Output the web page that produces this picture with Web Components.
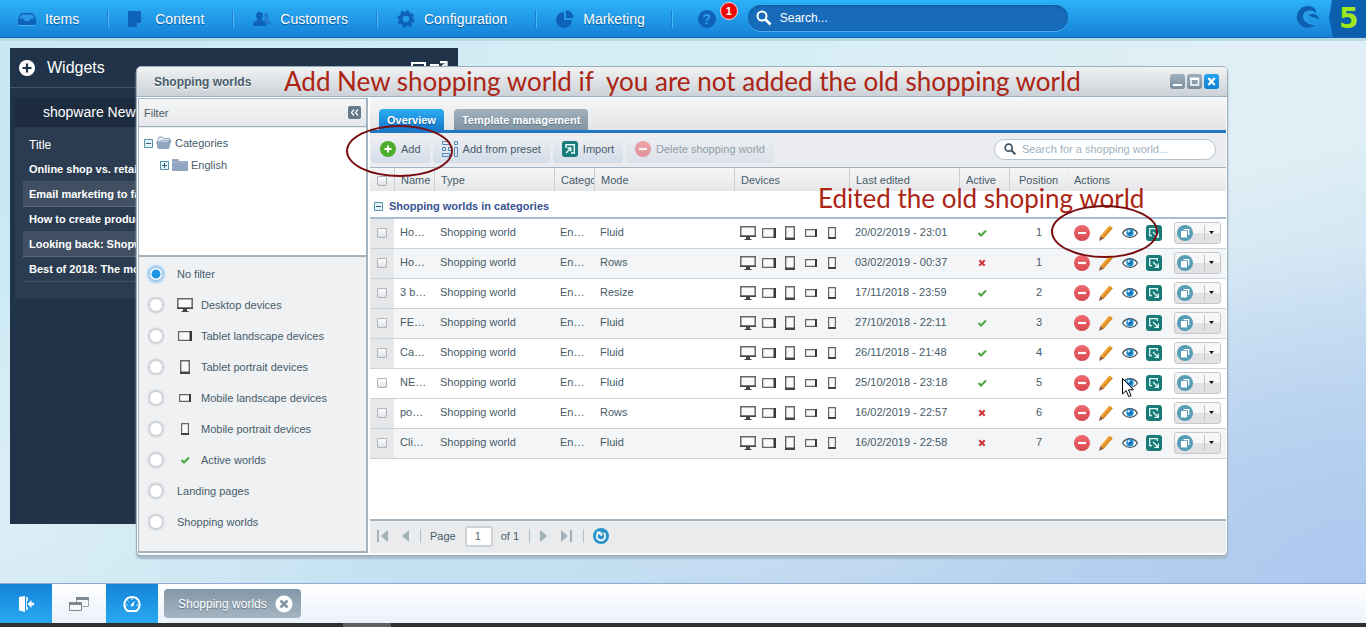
<!DOCTYPE html>
<html lang="en">
<head>
<meta charset="utf-8">
<title>Shopping worlds</title>
<style>
html, body { height: 100%; margin: 0; }
body { font: 11px/16px "Liberation Sans", Arial, sans-serif; color: #475c6a; overflow: hidden; }
</style>
</head>
<body>
<sw-app>
  <sw-topbar slot="top"></sw-topbar>
  <sw-widgets></sw-widgets>
  <sw-window heading="Shopping worlds">
    <sw-filter slot="side"></sw-filter>
    <sw-worlds></sw-worlds>
  </sw-window>
  <sw-taskbar slot="bottom"></sw-taskbar>
  <sw-notes slot="overlay"></sw-notes>
</sw-app>

<script>
const define = (name, html, setup) => {
  const template = document.createElement('template');
  template.innerHTML = html;
  customElements.define(name, class extends HTMLElement {
    constructor() {
      super();
      this.attachShadow({ mode: 'open' }).append(template.content.cloneNode(true));
    }
    connectedCallback() {
      if (setup && !this.ready) { this.ready = true; setup(this, this.shadowRoot); }
    }
  });
};

/* Icons: [width, height, svg content] */
const ICONS = {
  items: [18, 14, '<path d="M3 1h12l3 6v6H0V7z" fill="#0e62b8"/><path d="M3.6 2.4h10.800l2 4.200H12.500l-1.500 2.400h-4L5.500 6.600H1.600z" fill="#2a9ae8"/><path d="M.5 13.500h17" stroke="#49b2f3"/>'],
  content: [18, 18, '<path d="M0 1h13v11l-4 5H0z" fill="#0e62b8"/><path d="M9 17v-4h4z" fill="#2f8fe0"/>'],
  customers: [18, 16, '<path d="M12.500 2c2 0 3 1.300 3 3.200 0 1.500-.6 2.400-1.200 3 .2 1.700 3.700 1.600 3.700 4.300v1h-4.500c-.3-2-1.800-2.700-3-3.300.8-.8 1.200-2 1.200-4 0-1.300-.4-2.400-1-3.300.5-.6 1-.9 1.800-.9z" fill="#2378cc"/><path d="M6.500 1c2.200 0 3.400 1.500 3.400 3.600 0 1.800-.7 3-1.400 3.700.2 2.200 4.500 2 4.500 5.200v1.500H0v-1.500c0-3.200 4.300-3 4.500-5.200C3.800 7.600 3.100 6.400 3.100 4.600 3.100 2.500 4.300 1 6.500 1z" fill="#0e62b8"/>'],
  gear: [18, 18, '<circle cx="9" cy="9" r="5.200" fill="none" stroke="#0e62b8" stroke-width="4"/><circle cx="9" cy="9" r="7.400" fill="none" stroke="#0e62b8" stroke-width="2.600" stroke-dasharray="3.100 2.710"/>'],
  pie: [18, 18, '<path d="M8 2v8h8a8 8 0 1 1-8-8z" fill="#0e62b8"/><path d="M10 0a8 8 0 0 1 7.500 8H10z" fill="#0e62b8"/>'],
  search: [16, 16, '<circle cx="6" cy="6" r="4.500" fill="none" stroke="#fff" stroke-width="2"/><path d="M9.500 9.500l5 5" stroke="#fff" stroke-width="2.600"/>'],
  searchdark: [12, 12, '<circle cx="4.700" cy="4.700" r="3.500" fill="none" stroke="#3f5360" stroke-width="1.700"/><path d="M7.300 7.300l4 4" stroke="#3f5360" stroke-width="2"/>'],
  shopware: [24, 24, '<path d="M18.500 3.300A11 11 0 1 0 19 20.200C13 19.500 7.500 17 7.500 12.500 7.500 8 13 6.500 20 8c0-2-.5-3.700-1.500-4.700z" fill="#0e5fb0"/><path d="M20 7.500C14 3.500 7 6 7 11.500c0 5 6.500 8 12.500 8.500-4-2-8.500-4-8.500-7.500 0-3 4-4.500 9-5z" fill="#2a9de9"/><path d="M12.500 9.500c4-1.500 10.500-.5 10.500 5.500-3-3-8.500-2.500-10.500-5.500z" fill="#0e5fb0"/>'],
  plus: [16, 16, '<circle cx="8" cy="8" r="8" fill="#fff"/><path d="M8 3.500v9M3.500 8h9" stroke="#203348" stroke-width="2.200"/>'],
  panelmin: [16, 14, '<path d="M1 13V2h13v11" fill="none" stroke="#fff" stroke-width="2"/>'],
  panelout: [20, 14, '<path d="M2 14V4h8M6 13l10-10M11 1.200h6.500V8" fill="none" stroke="#fff" stroke-width="2.200"/>'],
  monitor: [16, 14, '<path d="M.8.800h14.400v9.400H.800z" fill="#fafafa" stroke="#666" stroke-width="1.500"/><path d="M0 9.500h16V11H0zM6 11h4v2h1.500v1h-7v-1H6z" fill="#444"/>'],
  tabletl: [16, 12, '<path d="M1.600 1.600h12v8.800h-12z" fill="#fafafa" stroke="#666" stroke-width="1.300"/><path d="M12.500 1H15v10h-2.500z" fill="#3a3a3a"/>'],
  tabletp: [16, 14, '<path d="M3.700.700h8.600v12.500H3.700z" fill="#fafafa" stroke="#666" stroke-width="1.400"/><path d="M3 11.500h10V14H3z" fill="#444"/>'],
  mobilel: [16, 10, '<path d="M2.600 1.600h10v6.800h-10z" fill="#fafafa" stroke="#666" stroke-width="1.200"/><path d="M12 1h2v8h-2z" fill="#3a3a3a"/>'],
  mobilep: [16, 12, '<path d="M4.600.600h6.800v10.800H4.600z" fill="#fafafa" stroke="#666" stroke-width="1.200"/><path d="M4 10h8v2H4z" fill="#444"/>'],
  check: [16, 10, '<path d="M4.500 5l2.500 2.500L12 2.500" fill="none" stroke="#4aa63c" stroke-width="2"/>'],
  cross: [16, 10, '<path d="M5.300 2.300l5.400 5.400M10.700 2.300L5.300 7.700" stroke="#d13438" stroke-width="2"/>'],
  add: [16, 16, '<circle cx="8" cy="8" r="8" fill="#4cac2c"/><path d="M8 4.500v7M4.500 8h7" stroke="#fff" stroke-width="2"/>'],
  minus: [16, 16, '<defs><linearGradient id="r" x2="0" y2="1"><stop stop-color="#ee6a70"/><stop offset="1" stop-color="#d74850"/></linearGradient></defs><circle cx="8" cy="8" r="8" fill="url(#r)"/><path d="M4 8h8" stroke="#fff" stroke-width="2.200"/>'],
  preset: [16, 16, '<g fill="none" stroke="#5687bd"><path d="M.5.500h7v3h-7zM12.500.500h3v3h-3zM.5 6.500h3v3h-3zM6.500 6.500h3v3h-3zM.5 12.500h7v3h-7zM12.500 6.500h3v9h-3z"/></g>'],
  import: [16, 16, '<rect width="16" height="16" rx="3" fill="#187b78"/><path d="M4 7V3.700h8.300V12H9" fill="none" stroke="#e8fbf8" stroke-width="1.500"/><path d="M4 12l4.500-4.500M5.500 7h3.300v3.300" fill="none" stroke="#e8fbf8" stroke-width="1.500"/>'],
  export: [16, 16, '<rect width="16" height="16" rx="3" fill="#187b78"/><path d="M6 10.700H3.700V3.700h7.600V6" fill="none" stroke="#e0f7f4" stroke-width="1.300"/><path d="M7 7l5 5M12.300 8.500v3.800H8.500" fill="none" stroke="#e0f7f4" stroke-width="1.300"/>'],
  pencil: [16, 16, '<path d="M11.500.500l3.200 2.700-9.200 10.500-3.200-2.600z" fill="#f0a02e"/><path d="M13.200 2l1.500 1.200-9.200 10.500-1.600-1.300z" fill="#dc8c26"/><path d="M2.300 11.100l3.200 2.600L1 16z" fill="#8a5a48"/>'],
  eye: [16, 12, '<path d="M.6 6C4 .3 12 .3 15.400 6 12 11.700 4 11.700.6 6z" fill="#fff" stroke="#465560" stroke-width="1.300"/><circle cx="8" cy="5.700" r="3.700" fill="#1f8fd6"/><circle cx="8" cy="5.700" r="1.500" fill="#0f5f9c"/><circle cx="6.800" cy="4.200" r="1.200" fill="#d6efff"/>'],
  copy: [16, 16, '<circle cx="8" cy="8" r="8" fill="#569db5"/><path d="M6.500 4.600h5.200v5.400" fill="none" stroke="#fff" stroke-width="1.300"/><path d="M4 6h6v6.500H4z" fill="#fff"/>'],
  folderopen: [16, 14, '<path d="M2 3l1-2h4l1 1.500h6v2H5L2 12z" fill="#e4ebf2" stroke="#8399b3" stroke-width=".8"/><path d="M0 5.500h11.500L14 4h1.500L13 13H2z" fill="#8fa5c0"/>'],
  folder: [16, 14, '<path d="M0 1h6l1.500 2H16v10H0z" fill="#8fa5c0"/><path d="M0 4h16" stroke="#a9bbd0"/>'],
  collapse: [9, 9, '<path d="M.5.500h8v8h-8z" fill="#e3f4fa" stroke="#5593a8"/><path d="M2 4.500h5" stroke="#2f6379"/>'],
  expand: [9, 9, '<path d="M.5.500h8v8h-8z" fill="#e3f4fa" stroke="#5593a8"/><path d="M2 4.500h5M4.500 2v5" stroke="#2f6379"/>'],
  first: [14, 12, '<path d="M1 0h2v12H1zM12 0v12L5 6z" fill="#a2b0b9"/>'],
  prev: [8, 12, '<path d="M7 0v12L0 6z" fill="#a2b0b9"/>'],
  next: [8, 12, '<path d="M1 0v12l7-6z" fill="#a2b0b9"/>'],
  last: [14, 12, '<path d="M11 0h2v12h-2zM2 0v12l7-6z" fill="#a2b0b9"/>'],
  reload: [16, 16, '<circle cx="8" cy="8" r="8" fill="#2a93ca"/><path d="M5.600 4.700a4.200 4.200 0 1 0 5 .2" fill="none" stroke="#fff" stroke-width="1.700"/><path d="M3.400 3.400h4.300v4.200z" fill="#fff"/><path d="M8.500 4.500v3.500" stroke="#fff" stroke-width="1.500"/>'],
  door: [16, 16, '<path d="M1 1l6-1v16l-6-1.500z" fill="#fff"/><path d="M8 1h2v4h-1v6h1v3H8z" fill="#cfe8fb"/><path d="M9.500 8l4-4v2.800H16v2.400h-2.500V12z" fill="#fff"/>'],
  windows: [20, 16, '<path d="M7.500 1.500h12v9h-12z" fill="#f6f8fb" stroke="#9aa3ab"/><path d="M7 1h13v3H7z" fill="#7e8890"/><path d="M.5 6.500h12v8H.500z" fill="#f6f8fb" stroke="#7e8890"/><path d="M0 6h13v3H0z" fill="#7e8890"/>'],
  gauge: [18, 16, '<path d="M4.500 15C-.8 10.500 1 1 9 1s9.800 9.500 4.500 14z" fill="none" stroke="#fff" stroke-width="2"/><path d="M11.800 5L10.500 10 8 10.500 7.600 8.800z" fill="#fff"/><path d="M9 2v2M3 9h1.500M13.500 9H15M4.600 4.600l1 1" stroke="#fff"/>'],
  close: [18, 18, '<circle cx="9" cy="9" r="8.500" fill="#fff"/><path d="M5.500 5.500l7 7M12.500 5.500l-7 7" stroke="#8296a5" stroke-width="2.800"/>'],
  wmin: [15, 15, '<path d="M3 10h9v2H3z" fill="#fff"/>'],
  wmax: [15, 15, '<path d="M4 5h7.500v6H4z" fill="none" stroke="#fff" stroke-width="1.500"/><path d="M3 3.500h9V6H3z" fill="#fff"/>'],
  wclose: [15, 15, '<path d="M4.300 4l6.400 7M10.700 4l-6.400 7" stroke="#fff" stroke-width="2.200"/>'],
  chevrons: [13, 13, '<path d="M6 3.500l-2.500 3L6 9.500M10 3.500l-2.500 3 2.500 3" fill="none" stroke="#fff" stroke-width="1.200"/>'],
  caret: [5, 3, '<path d="M0 0h5L2.500 3z" fill="#111"/>'],
  cursor: [13, 20, '<path d="M.5.500v15.500l3.600-3.400 2.600 6 2.400-1-2.600-5.800h5z" fill="#fff" stroke="#000"/>']
};
define('sw-icon', `<style>:host{display:inline-block;flex:none;line-height:0}svg{display:block}</style><span></span>`, (el, root) => {
  const [w, h, body] = ICONS[el.getAttribute('name')];
  root.querySelector('span').innerHTML = `<svg width="${w}" height="${h}" viewBox="0 0 ${w} ${h}" aria-hidden="true">${body}</svg>`;
});

define('sw-app', `<style>
:host{display:grid;grid-template-rows:38px 1fr 44px;height:100vh;position:relative;
 background:radial-gradient(ellipse 500px 330px at 100% 92%,#adc9ee,rgba(178,206,239,0)),radial-gradient(ellipse 360px 300px at 0 82%,#dceef5,rgba(220,238,245,0)),linear-gradient(165deg,rgba(218,236,243,0) 50%,#b8d2ef 92%),linear-gradient(90deg,#c8e9f4,#d4edf5 45%,#dfeff5 90%)}
main{position:relative;border-top:3px solid #b9d9e4;box-sizing:border-box}
</style><slot name="top"></slot><main><slot></slot></main><slot name="bottom"></slot><slot name="overlay"></slot>`);

define('sw-topbar', `<style>
:host{display:block}
header{display:flex;align-items:center;height:38px;box-sizing:border-box;background:linear-gradient(#2db2f8,#1581d8);border-bottom:1px solid #1267b2}
nav{display:flex;align-items:center}
nav a{display:flex;align-items:center;gap:9px;height:18px;padding:0 28px 0 20px;border-right:1px solid #1a7fd2;box-shadow:1px 0 #4cb9f6;
 font-size:14px;color:#fff;text-decoration:none;text-shadow:0 1px 1px #0c5496}
nav a:first-child{padding-left:18px}
nav a:last-child{padding-right:26px}
nav sw-icon{width:18px}
.help{position:relative;margin-left:26px;width:18px;height:18px;padding:0;border:0;border-radius:9px;background:#0e62b8;color:#2ea0ee;font:bold 14px/18px "Liberation Sans",sans-serif}
.help b{position:absolute;left:22px;top:-8px;width:16px;height:16px;border:1px solid #ffd6d6;border-radius:9px;background:#f00505;color:#fff;font-size:11px;line-height:16px}
label{display:flex;align-items:center;gap:8px;box-sizing:border-box;width:320px;height:26px;margin:0 auto 2px 32px;padding:0 8px;border-radius:13px;background:#176bb8;box-shadow:0 1px #4aaff2,inset 0 1px 2px #0f569d}
input{flex:1;min-width:0;border:0;outline:0;background:none;color:#fff;font:12px "Liberation Sans",sans-serif;padding:0}
input::placeholder{color:#fff;opacity:1}
.logo{margin:-4px 9px 0 0}
.five{width:37px;height:37px;box-sizing:border-box;padding-left:10px;background:#0c5faf;clip-path:polygon(3px 0,100% 0,100% 100%,4px 100%,0 50%);color:#9fe81a;font:bold 28px/38px "DejaVu Sans",sans-serif}
</style>
<header><nav>
<a href="#items"><sw-icon name="items"></sw-icon>Items</a>
<a href="#content"><sw-icon name="content"></sw-icon>Content</a>
<a href="#customers"><sw-icon name="customers"></sw-icon>Customers</a>
<a href="#configuration"><sw-icon name="gear"></sw-icon>Configuration</a>
<a href="#marketing"><sw-icon name="pie"></sw-icon>Marketing</a>
</nav>
<button class="help">?<b>1</b></button>
<label><sw-icon name="search"></sw-icon><input type="search" placeholder="Search..." aria-label="Search"></label>
<sw-icon class="logo" name="shopware"></sw-icon><span class="five">5</span></header>`);

define('sw-widgets', `<style>
:host{position:absolute;left:10px;top:7px;width:448px;bottom:59px;background:#203348;color:#fff}
header{display:flex;align-items:center;gap:12px;height:39px;padding:0 9px;border-bottom:1px solid #3f5266;font-size:16px}
header span{flex:1}
.tools{display:flex;gap:2px}
section{margin:10px 5px 0;background:#2b3c50;height:201px}
h2{margin:0;padding:0 28px;background:#1c2c3e;font:14px/29px "Liberation Sans",sans-serif}
table{width:calc(100% - 16px);margin:6px 8px 0;border-spacing:0;font-size:11px}
th{text-align:left;font-size:12px;font-weight:normal;height:24px;padding:0 6px}
td{height:24px;padding:0 6px;font-weight:bold;border-bottom:1px solid #3d5064}
tr:nth-child(even) td{background:#405062;border-color:#5d6b7b}
</style>
<header><sw-icon name="plus"></sw-icon><span>Widgets</span><div class="tools"><sw-icon name="panelmin"></sw-icon><sw-icon name="panelout"></sw-icon></div></header>
<section><h2>shopware News</h2><table><thead><tr><th>Title</th></tr></thead><tbody>
<tr><td>Online shop vs. retail</td></tr><tr><td>Email marketing to fans</td></tr><tr><td>How to create products</td></tr><tr><td>Looking back: Shopware</td></tr><tr><td>Best of 2018: The most</td></tr></tbody></table></section>`);

define('sw-window', `<style>
:host{position:absolute;left:136px;right:138px;top:25px;bottom:27px;display:flex;flex-direction:column;box-sizing:border-box;border:1px solid #9aabb9;border-radius:5px;background:#fff;overflow:hidden;box-shadow:0 3px 2px #a5bacd}
header{display:flex;align-items:center;gap:2px;height:29px;padding:0 8px 0 17px;border-bottom:1px solid #9db0bd;background:linear-gradient(#f1f2f3,#cbd2d8)}
h1{flex:1;margin:0;font:bold 12px/28px "Liberation Sans",sans-serif;color:#475c6a;text-shadow:0 1px #fff}
button{width:15px;height:15px;padding:0;border:0;border-radius:3px;background:linear-gradient(#9eb0bd,#7b8f9f)}
button.x{background:linear-gradient(#25a5ee,#0f7fd2)}
.body{flex:1;display:flex;min-height:0;padding:0 1px 2px 1px}
</style>
<header><h1></h1><button aria-label="Minimise"><sw-icon name="wmin"></sw-icon></button><button aria-label="Maximise"><sw-icon name="wmax"></sw-icon></button><button class="x" aria-label="Close"><sw-icon name="wclose"></sw-icon></button></header>
<div class="body"><slot name="side"></slot><slot></slot></div>`, (el, root) => {
  root.querySelector('h1').textContent = el.getAttribute('heading');
});

define('sw-filter', `<style>
:host{display:flex;flex-direction:column;flex:none;width:230px;box-sizing:border-box;border:1px solid #a3b4c0;border-width:1px 2px 2px 1px;margin-top:1px;background:#eff1f3}
header{display:flex;align-items:center;justify-content:space-between;height:27px;padding:0 5px;background:linear-gradient(#f4f5f6,#e6e8eb);border-bottom:1px solid #a3b4c0}
header button{width:13px;height:13px;padding:0;border:0;border-radius:2px;background:#64788a}
.tree{height:119px;box-sizing:content-box;padding:4px 0;border-bottom:2px solid #a3b4c0;background:#fff;border-top:1px solid #e6ebef}
.tree div{display:flex;align-items:center;gap:3px;height:22px;padding-left:5px}
.tree .sub{padding-left:21px}
form{padding-top:1px}
label{display:flex;align-items:center;height:31px;padding-left:9px}
label sw-icon{margin-right:8px;width:16px}
input{appearance:none;width:14px;height:14px;margin:0 14px 0 1px;border-radius:50%;background:#fff;border:1px solid #ccd0d4;box-shadow:0 0 2px 1px #c8ccd0}
input:checked{background:radial-gradient(circle,#1b96e4 4px,#fff 5px);border-color:#8fbfe6;box-shadow:0 0 2px 2px #9fcdf0}
</style>
<header>Filter<button aria-label="Collapse"><sw-icon name="chevrons"></sw-icon></button></header>
<div class="tree"><div><sw-icon name="collapse"></sw-icon><sw-icon name="folderopen"></sw-icon>Categories</div>
<div class="sub"><sw-icon name="expand"></sw-icon><sw-icon name="folder"></sw-icon>English</div></div>
<form></form>`, (el, root) => {
  const rows = [['', 'No filter'], ['monitor', 'Desktop devices'], ['tabletl', 'Tablet landscape devices'], ['tabletp', 'Tablet portrait devices'],
    ['mobilel', 'Mobile landscape devices'], ['mobilep', 'Mobile portrait devices'], ['check', 'Active worlds'], ['', 'Landing pages'], ['', 'Shopping worlds']];
  root.querySelector('form').innerHTML = rows.map(([icon, text], i) =>
    `<label><input type="radio" name="filter"${i ? '' : ' checked'}>${icon ? `<sw-icon name="${icon}"></sw-icon>` : ''}${text}</label>`).join('');
});

define('sw-worlds', `<style>
:host{flex:1;min-width:0;display:flex;flex-direction:column;padding-left:2px}
*{box-sizing:border-box}
.tabs{display:flex;align-items:flex-end;gap:10px;height:36px;padding-left:9px;border-bottom:3px solid #2079c2;background:linear-gradient(#f7f7f8,#e3e4e6)}
.tabs button{height:21px;padding:0 8px;border:0;border-radius:4px 4px 0 0;background:linear-gradient(#a3b2be,#8094a3);color:#fff;font:bold 11px "Liberation Sans",sans-serif;text-shadow:0 1px 1px #5d7282}
.tabs button.on{background:linear-gradient(#2badf3,#1678cc);text-shadow:0 1px 1px #0c5496}
.tools{display:flex;align-items:center;gap:3px;height:35px;padding:0 10px 2px 1px;background:#eaecef;border-bottom:1px solid #a3b4c0}
.tools button{display:flex;align-items:center;gap:5px;height:27px;padding:0 9px;border:0;border-radius:4px;background:linear-gradient(#eef0f3,#d2dce8);color:#475c6a;font:11px "Liberation Sans",sans-serif}
.tools button:disabled{opacity:.55}
.tools label{display:flex;align-items:center;gap:6px;width:222px;height:21px;margin-left:auto;padding:0 9px;border:1px solid #b4c3ce;border-radius:11px;background:#fff}
.tools input{flex:1;min-width:0;border:0;padding:0;background:none;font:11px "Liberation Sans",sans-serif}
input::placeholder{color:#9fb2be;opacity:1}
.grid{flex:1;background:#fff;min-height:0}
table{width:100%;table-layout:fixed;border-spacing:0}
th{height:23px;padding:0 0 0 6px;text-align:left;font-weight:normal;white-space:nowrap;overflow:hidden;background:linear-gradient(#f6f6f7,#e6e7e9);border-left:1px solid #c9d0d5}
th:first-child{border-left:0}
thead th.act{border-left-color:#e9ebec;padding-left:5px}
thead th.pos{padding-left:9px}
td{height:30px;padding:0 0 4px 6px;white-space:nowrap;overflow:hidden;border-bottom:1px solid #c8d3db}
tr.group td{height:28px;border-bottom:2px solid #a4bcd6;padding:4px 0 0 4px;font-weight:bold;color:#385293}
.group div,.icons{display:flex;align-items:center}
.group div{gap:6px}
tr.alt td{background:#f3f5f6}
tbody td.sel{background:#e6e8e9;padding:0 0 1px 7px}
tbody tr.hover td{background:#fff}
thead .sel{padding:2px 0 0 7px}
.sel input{display:block;appearance:none;width:10px;height:10px;margin:0;border:1px solid #adb3b8;border-radius:1px;background:linear-gradient(#fff,#dfe1e4)}
.icons{gap:5px;padding-top:2px}
.acts{gap:8px}
.acts button{display:flex;align-items:center;padding:0;border:0;background:none}
.acts .split{width:47px;height:22px;margin-left:4px;padding:0 6px 0 2px;border:1px solid #c8c8ca;border-radius:3px;background:linear-gradient(#f7f7f7 50%,#e2e2e4 50%)}
.split i{width:1px;height:16px;margin:0 4px 0 auto;background:#c4c4c6}
.num{text-align:right;padding-right:26px}
.mid{padding-left:15px}
footer{display:flex;align-items:center;height:34px;padding:0 6px 2px;border-top:2px solid #a3b4c0;background:#e9ebed}
footer button{padding:0;border:0;background:none;display:flex}
footer button+button{margin-left:12px}
footer i{width:1px;height:14px;background:#b4bdc4;margin:0 9px 0 10px}
footer input{width:28px;height:21px;margin:0 8px 0 9px;padding:0 0 0 8px;border:2px solid #cdd2d6;border-radius:3px;background:#fff;color:#52697a;font:11px "Liberation Sans",sans-serif}
</style>
<div class="tabs" role="tablist"><button role="tab" class="on">Overview</button><button role="tab">Template management</button></div>
<div class="tools"><button><sw-icon name="add"></sw-icon>Add</button><button><sw-icon name="preset"></sw-icon>Add from preset</button><button><sw-icon name="import"></sw-icon>Import</button><button disabled><sw-icon name="minus"></sw-icon>Delete shopping world</button>
<label><sw-icon name="searchdark"></sw-icon><input type="search" placeholder="Search for a shopping world..." aria-label="Search for a shopping world"></label></div>
<div class="grid"><table>
<colgroup><col style="width:24px"><col style="width:40px"><col style="width:120px"><col style="width:40px"><col style="width:140px"><col style="width:115px"><col style="width:110px"><col style="width:50px"><col style="width:59px"><col></colgroup>
<thead><tr><th class="sel"><input type="checkbox" aria-label="Select all"></th><th>Name</th><th>Type</th><th>Category</th><th>Mode</th><th>Devices</th><th>Last edited</th><th>Active</th><th class="pos">Position</th><th class="act">Actions</th></tr></thead>
<tbody></tbody></table></div>
<footer><button aria-label="First page"><sw-icon name="first"></sw-icon></button><button aria-label="Previous page"><sw-icon name="prev"></sw-icon></button><i></i>
<label for="page">Page</label><input id="page" value="1">of 1<i></i>
<button aria-label="Next page"><sw-icon name="next"></sw-icon></button><button aria-label="Last page"><sw-icon name="last"></sw-icon></button><i></i><button aria-label="Reload"><sw-icon name="reload"></sw-icon></button></footer>`, (el, root) => {
  const rows = [
    ['Ho…', 'Fluid', '20/02/2019 - 23:01', 1, 1], ['Ho…', 'Rows', '03/02/2019 - 00:37', 0, 1], ['3 b…', 'Resize', '17/11/2018 - 23:59', 1, 2],
    ['FE…', 'Fluid', '27/10/2018 - 22:11', 1, 3], ['Ca…', 'Fluid', '26/11/2018 - 21:48', 1, 4], ['NE…', 'Fluid', '25/10/2018 - 23:18', 1, 5],
    ['po…', 'Rows', '16/02/2019 - 22:57', 0, 6], ['Cli…', 'Fluid', '16/02/2019 - 22:58', 0, 7]];
  const icon = n => `<sw-icon name="${n}"></sw-icon>`;
  const action = (n, label) => `<button aria-label="${label}">${icon(n)}</button>`;
  root.querySelector('tbody').innerHTML =
    `<tr class="group"><td colspan="10"><div>${icon('collapse')}Shopping worlds in categories</div></td></tr>` +
    rows.map(([name, mode, date, active, pos], i) => `<tr class="${i % 2 ? 'alt' : ''}${i === 5 ? ' hover' : ''}">
<td class="sel"><input type="checkbox" aria-label="Select ${name}"></td><td>${name}</td><td>Shopping world</td><td>En…</td><td>${mode}</td>
<td><div class="icons">${['monitor', 'tabletl', 'tabletp', 'mobilel', 'mobilep'].map(icon).join('')}</div></td>
<td>${date}</td><td class="mid"><div class="icons">${icon(active ? 'check' : 'cross')}</div></td><td class="num">${pos}</td>
<td><div class="icons acts">${action('minus', 'Delete')}${action('pencil', 'Edit')}${action('eye', 'Preview')}${action('export', 'Export')}<button class="split" aria-label="Duplicate">${icon('copy')}<i></i>${icon('caret')}</button></div></td></tr>`).join('');
});

define('sw-taskbar', `<style>
:host{display:flex;box-sizing:border-box;gap:1px;border-top:1px solid #8fabcf;padding-bottom:4px;
 background:linear-gradient(#5e615d,#5e615d) 343px 100%/48px 4px no-repeat,linear-gradient(#2b322c,#2b322c) 0 100%/100% 4px no-repeat,linear-gradient(#fff,#e9f0fa)}
button{display:flex;align-items:center;justify-content:center;padding:0;border:0;font:12px "Liberation Sans",sans-serif}
.sq{width:52px;background:none}
.blue{background:linear-gradient(#1583d8,#29aaf2)}
.task{align-self:center;gap:8px;height:29px;margin-left:5px;padding:0 8px 0 14px;border-radius:4px;background:linear-gradient(#8497a6,#a5b5c2);color:#fff;text-shadow:0 1px 1px #5d7282}
</style>
<button class="sq blue" aria-label="Log out"><sw-icon name="door"></sw-icon></button><button class="sq" aria-label="Windows"><sw-icon name="windows"></sw-icon></button><button class="sq blue" aria-label="Widgets"><sw-icon name="gauge"></sw-icon></button>
<button class="task">Shopping worlds<sw-icon name="close"></sw-icon></button>`);

/* Tutorial mark-up drawn over the desktop */
define('sw-notes', `<style>
:host{position:absolute;inset:0;pointer-events:none}
p,div,sw-icon{position:absolute;margin:0}
p{font:26px/32px Lato,sans-serif;color:#ac2413;white-space:pre}
.a{left:284px;top:65px}.b{left:818px;top:182px}
div{box-sizing:border-box;border:2px solid #780d10;border-radius:50%}
.c{left:346px;top:125px;width:107px;height:52px}
.d{left:1051px;top:205px;width:107px;height:53px}
sw-icon{left:1122px;top:378px}
</style>
<p class="a">Add New shopping world if  you are not added the old shopping world</p><p class="b">Edited the old shoping world</p>
<div class="c"></div><div class="d"></div><sw-icon name="cursor"></sw-icon>`);
</script>
</body>
</html>
